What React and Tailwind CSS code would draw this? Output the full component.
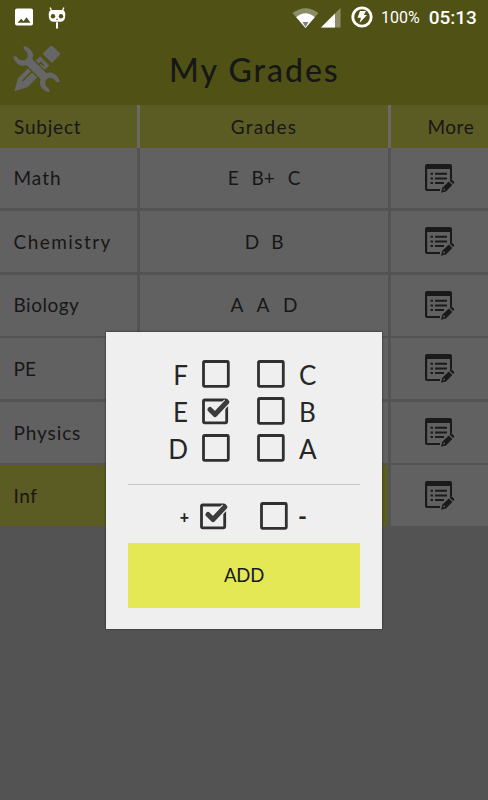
const rows = [
  { subject: "Math", grades: "E B+ C", ls: "tracking-[1px]", gs: "tracking-[0px] [word-spacing:8px]" },
  { subject: "Chemistry", grades: "D B", ls: "tracking-[1.450px]", gs: "tracking-[-0.3px] [word-spacing:8px]" },
  { subject: "Biology", grades: "A A D", ls: "tracking-[0.5px]", gs: "[word-spacing:9.500px]" },
  { subject: "PE", grades: "", ls: "tracking-[0px]", gs: "" },
  { subject: "Physics", grades: "", ls: "tracking-[0.900px]", gs: "" },
  { subject: "Inf", grades: "", ls: "tracking-[0.5px]", gs: "", active: true },
];

function StatusBar() {
  return (
    <div className="h-9 flex items-center text-white font-[Roboto,sans-serif]">
      {/* notifications */}
      <svg className="ml-[15px] w-[19px] h-[19px] -mt-px" viewBox="0 0 19 19">
        <path fill="#fff" fillRule="evenodd" d="M2 .5h14a2 2 0 0 1 2 2v13a2 2 0 0 1-2 2H2a2 2 0 0 1-2-2v-13a2 2 0 0 1 2-2Z M2.500 14.800h13l-4-5.500-3 4-2.200-2.600Z" />
      </svg>
      <svg className="ml-[14px] w-[18px] h-[22px] -mt-px" viewBox="0 0 18 22">
        <path d="M2.300 1l1.500 3.200M15.700 1l-1.500 3.200" stroke="#fff" strokeWidth="1.300" strokeLinecap="round" />
        <path d="M4 3H14Q17.300 3 17.300 7.800Q17.300 14.800 12.800 14.800H5.200Q.7 14.800 .7 7.800Q.7 3 4 3Z" fill="#fff" />
        <circle cx="5" cy="9.200" r="2.200" fill="#505114" />
        <circle cx="13" cy="9.200" r="2.200" fill="#505114" />
        <path d="M8 12.300h2" stroke="#505114" strokeWidth=".8" />
        <path d="M9 16v4.800" stroke="#fff" strokeWidth="2" strokeLinecap="round" />
      </svg>

      {/* system */}
      <svg className="ml-[226px] w-[27px] h-5 -mt-px" viewBox="0 0 27 20">
        <path d="M.5 5Q13.500-4.500 26.500 5L13.500 20Z" fill="#8c8d66" />
        <path d="M4.200 9.200Q13.500 1.500 22.800 9.200L13.500 20Z" fill="#fff" />
        <path d="M10.500 14h6l-3 5Z" fill="#7e7e88" />
      </svg>
      <svg className="ml-[2px] w-5 h-5 -mt-px" viewBox="0 0 20 20">
        <path d="M19.500 0v19.500H0Z" fill="#8c8d66" />
        <path d="M14 5.500v14H0Z" fill="#fff" />
      </svg>
      <svg className="ml-[10px] w-[22px] h-[22px] -mt-[2px]" viewBox="0 0 22 22">
        <circle cx="11" cy="11" r="9.200" fill="none" stroke="#fff" strokeWidth="2.800" />
        <path d="M9 5h6l-2.200 4H16l-7.500 8 1.500-5.200H6.500Z" fill="#fff" />
      </svg>
      <span className="ml-[8px] text-[16px]">100%</span>
      <span className="ml-[9px] text-[19px] font-medium">05:13</span>
    </div>
  );
}

function ToolsIcon() {
  return (
    <svg className="w-[50px] h-[48px] shrink-0" viewBox="0 0 50 48">
      {/* pencil */}
      <g transform="translate(1.300 45.200) rotate(-45)" fill="#666">
        <path d="M0 0L12-6.500H43V6.500H12Z" />
        <path d="M13-1.500H27M33-1.500H39V3" fill="none" stroke="#505114" strokeWidth="1.600" />
        <path d="M46.500-6.500H59V6.500H46.500Z" />
      </g>
      {/* wrench */}
      <g transform="translate(23.500 23.200) rotate(45)">
        <path
          d="M-25.500-7.500C-19-11.500-12-9.500-10-4.200H10C12-9.500 19-11.500 25.500-7.500L23.500-5.200H18L14.500-2V2L18 5.200H23.500L25.500 7.500C19 11.500 12 9.500 10 4.200H-10C-12 9.500-19 11.500-25.500 7.500L-23.500 5.200H-18L-14.500 2V-2L-18-5.200H-23.500Z"
          fill="#666"
          stroke="#505114"
          strokeWidth="2.500"
          paintOrder="stroke"
        />
      </g>
    </svg>
  );
}

function EditIcon() {
  return (
    <svg className="w-[30px] h-[30px] mt-px" viewBox="0 0 30 30">
      <path d="M2 0h23a2 2 0 0 1 2 2v13l-2 1.500V5H2.200v20H15v2H2a2 2 0 0 1-2-2V2a2 2 0 0 1 2-2Z" fill="#1a1a1a" />
      <path d="M5.500 9.800h2.500M5.500 14.500h2.500M5.500 19h2.500M10 9.800h12M10 14.500h12M10 19h9" stroke="#1a1a1a" strokeWidth="1.900" />
      <path d="M16 28.800l1.300-5 6.500-6.300 3.500 3.500-6.300 6.400ZM24.700 16.700l1-.9q.7-.6 1.400 0l1.900 1.900q.7.700 0 1.400l-.9.900Z" fill="#1a1a1a" />
      <path d="M17.800 26.800l1.300-2.600 1.200 1.200Z" fill="#616161" />
    </svg>
  );
}

function Check({ on }) {
  return (
    <svg className="w-[28px] h-[28px] shrink-0" viewBox="0 0 28 28">
      {on ? (
        <>
          <rect x="1.500" y="3" width="23.200" height="22.800" rx="1" fill="none" stroke="#303030" strokeWidth="2.800" />
          <path d="M8 12.500l5 5L25 5" fill="none" stroke="#efefef" strokeWidth="7.500" />
          <path d="M8 12.500l5 5L24.800 5" fill="none" stroke="#3c3c3c" strokeWidth="5" strokeLinecap="round" strokeLinejoin="round" />
        </>
      ) : (
        <rect x="1.500" y="1.500" width="24.800" height="24.800" rx="1" fill="none" stroke="#303030" strokeWidth="2.800" />
      )}
    </svg>
  );
}

function GradePair({ left, right, on }) {
  return (
    <div className="h-[37px] flex items-center text-[26px] leading-none text-[#262626]">
      <span className="w-[82px] text-right">{left}</span>
      <span className="ml-[14px] -mt-px flex"><Check on={on} /></span>
      <span className="ml-[27px] -mt-px flex"><Check /></span>
      <span className="ml-[14px]">{right}</span>
    </div>
  );
}

export default function App() {
  return (
    <div className="relative w-[488px] h-[800px] overflow-hidden bg-[#535353] text-[#171717] font-[Lato,sans-serif]">
      <header className="h-[105.300px] bg-[#505114]">
        <StatusBar />
        <div className="flex items-center h-[68px] pl-[13px]">
          <ToolsIcon />
          <h1 className="ml-[106px] text-[32px] font-medium leading-none tracking-[2px] whitespace-nowrap">My Grades</h1>
        </div>
      </header>

      {/* table head */}
      <div className="grid grid-cols-[137px_248px_97px] gap-x-[3px] h-[42.300px] bg-[#6a6a62] text-[19px]">
        <div className="bg-[#5b5c24] flex items-center pl-[14px] pt-px tracking-[0.800px]">Subject</div>
        <div className="bg-[#5b5c24] flex items-center justify-center pt-px tracking-[1.300px]">Grades</div>
        <div className="bg-[#5b5c24] flex items-center pl-[36.500px] pt-px tracking-[0.500px]">More</div>
      </div>

      <div className="flex flex-col gap-[2.700px]">
        {rows.map((r) => (
          <div key={r.subject} className="grid grid-cols-[137px_248px_97px] gap-x-[3px] h-[60.900px] text-[19px]">
            <div className={`flex items-center pl-[13.500px] pt-px ${r.ls} ${r.active ? "bg-[#5b5c24]" : "bg-[#616161]"}`}>{r.subject}</div>
            <div className={`flex items-center justify-center pt-px ${r.gs} ${r.active ? "bg-[#5b5c24]" : "bg-[#616161]"}`}>{r.grades}</div>
            <div className="bg-[#616161] flex items-center pl-[34px]"><EditIcon /></div>
          </div>
        ))}
      </div>

      {/* add grade dialog */}
      <div className="absolute left-[106px] top-[332px] w-[276px] h-[297px] bg-[#efefef] shadow-[0_0_2px_#222] pt-[24px] flex flex-col">
        <GradePair left="F" right="C" />
        <GradePair left="E" right="B" on />
        <GradePair left="D" right="A" />
        <div className="mx-[22px] mt-[17px] h-px bg-[#c8c8c8]" />
        <div className="h-[58px] pt-[5px] flex items-center text-[19px] font-bold text-[#262626]">
          <span className="w-[83px] text-right text-[16px] font-black">+</span>
          <span className="ml-[11px] -mt-px flex"><Check on /></span>
          <span className="ml-[32px] -mt-px flex"><Check /></span>
          <span className="ml-[10px] text-[24px] leading-none -mt-[2px]">-</span>
        </div>
        <button className="mx-[22px] h-[65px] bg-[#e5e855] text-[18.500px] tracking-[-0.200px] text-[#17172d]">ADD</button>
      </div>
    </div>
  );
}
